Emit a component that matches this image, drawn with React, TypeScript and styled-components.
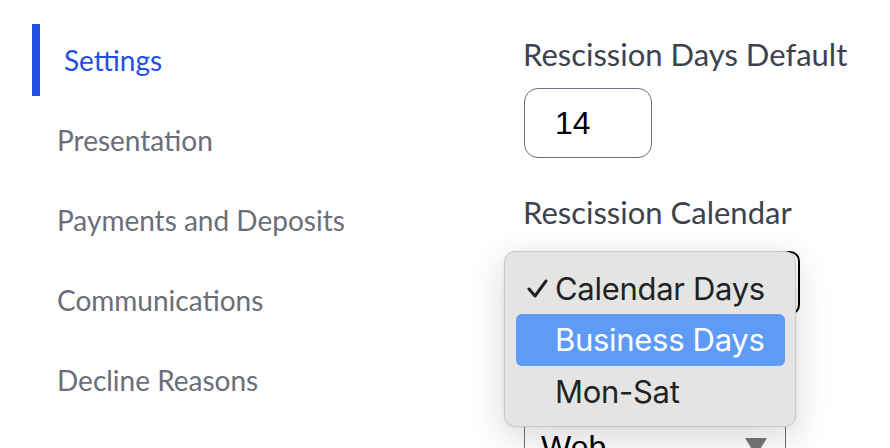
import React from "react";
import styled, { createGlobalStyle } from "styled-components";

const GlobalStyle = createGlobalStyle`
  body {
    margin: 0;
    background: #ffffff;
    font-family: Lato, "Open Sans", sans-serif;
  }
`;

const navItems = [
  "Settings",
  "Presentation",
  "Payments and Deposits",
  "Communications",
  "Decline Reasons"
];

const calendarOptions = ["Calendar Days", "Business Days", "Mon-Sat"];

const Page = styled.div`
  display: flex;
  width: 890px;
  height: 448px;
  overflow: hidden;
`;

const SideNav = styled.nav`
  flex: 0 0 491px;
  display: flex;
  flex-direction: column;
  gap: 8px;
  padding: 24px 0 0 32px;
`;

const NavItem = styled.div<{ $active?: boolean }>`
  height: 72px;
  display: flex;
  align-items: center;
  box-sizing: border-box;
  padding-left: ${(p) => (p.$active ? "24px" : "25px")};
  border-left: ${(p) => (p.$active ? "8px solid #1f4fe3" : "none")};
  font-size: 28px;
  color: ${(p) => (p.$active ? "#1f4fe3" : "#6b6e78")};
`;

const Content = styled.div`
  flex: 1;
  display: flex;
  flex-direction: column;
  padding-top: 36px;
`;

const Field = styled.div<{ $top?: number; $gap: number }>`
  position: relative;
  display: flex;
  flex-direction: column;
  align-items: flex-start;
  gap: ${(p) => p.$gap}px;
  margin-top: ${(p) => p.$top ?? 0}px;
`;

const Label = styled.div`
  font-size: 31px;
  line-height: 36px;
  color: #3d424d;
  white-space: nowrap;
`;

const NumberBox = styled.div`
  width: 128px;
  height: 70px;
  box-sizing: border-box;
  margin-left: 1px;
  border: 1.5px solid #6b7080;
  border-radius: 14px;
  padding-left: 30px;
  display: flex;
  align-items: center;
  font-family: "Liberation Sans", Arial, sans-serif;
  font-size: 32px;
  color: #000;
`;

const SelectBox = styled.div<{ $width: number; $dark?: boolean }>`
  width: ${(p) => p.$width}px;
  height: 64px;
  box-sizing: border-box;
  margin-left: 1px;
  border: ${(p) => (p.$dark ? "2px solid #000" : "1.5px solid #6b7080")};
  border-radius: 10px;
  padding: 0 18px 0 16px;
  display: flex;
  align-items: center;
  justify-content: space-between;
  font-family: "Liberation Sans", Arial, sans-serif;
  font-size: 32px;
  color: #000;
`;

const Menu = styled.div`
  position: absolute;
  left: -19px;
  top: 57px;
  width: 292px;
  height: 176px;
  box-sizing: border-box;
  padding: 11px 10px 9px 11px;
  background: #e4e4e4;
  border: 1px solid #c9c9c9;
  border-radius: 11px;
  box-shadow: 0 10px 36px rgba(0, 0, 0, 0.16), 0 0 2px rgba(0, 0, 0, 0.08);
  display: flex;
  flex-direction: column;
  z-index: 2;
`;

const Option = styled.div<{ $highlighted?: boolean }>`
  height: 52px;
  display: flex;
  align-items: center;
  padding-left: 11px;
  border-radius: 6px;
  background: ${(p) => (p.$highlighted ? "#5e9bf7" : "transparent")};
  color: ${(p) => (p.$highlighted ? "#fff" : "#222")};
  font-family: Inter, "Noto Sans", sans-serif;
  font-size: 31px;
  letter-spacing: -0.3px;
`;

const CheckSlot = styled.span`
  width: 28px;
  display: inline-flex;
  align-items: center;
`;

function Caret() {
  return (
    <svg width="22" height="18" viewBox="0 0 22 18">
      <polygon points="0,0 22,0 11,18" fill="#777" />
    </svg>
  );
}

function Check() {
  return (
    <svg width="21" height="20" viewBox="0 0 21 20">
      <polyline
        points="2,10 8,17 19,2"
        fill="none"
        stroke="#222"
        strokeWidth="3"
        strokeLinecap="round"
        strokeLinejoin="round"
      />
    </svg>
  );
}

export default function App() {
  return (
    <Page>
      <GlobalStyle />
      <SideNav>
        {navItems.map((item, i) => (
          <NavItem key={item} $active={i === 0}>
            {item}
          </NavItem>
        ))}
      </SideNav>

      <Content>
        <Field $gap={16}>
          <Label>Rescission Days Default</Label>
          <NumberBox>14</NumberBox>
        </Field>

        <Field $top={36} $gap={21}>
          <Label>Rescission Calendar</Label>
          <SelectBox $width={276} $dark>
            Calendar Days
            <Caret />
          </SelectBox>
          <Menu>
            {calendarOptions.map((opt, i) => (
              <Option key={opt} $highlighted={i === 1}>
                <CheckSlot>{i === 0 && <Check />}</CheckSlot>
                {opt}
              </Option>
            ))}
          </Menu>
        </Field>

        <Field $top={100} $gap={0}>
          <SelectBox $width={262}>
            Web
            <Caret />
          </SelectBox>
        </Field>
      </Content>
    </Page>
  );
}
